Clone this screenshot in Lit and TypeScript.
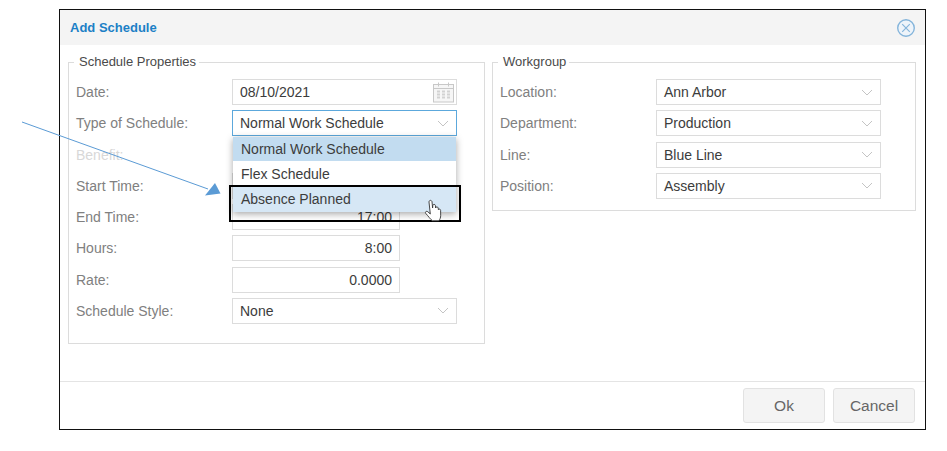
import { LitElement, html, css } from "lit";
import { customElement } from "lit/decorators.js";

const chevron = html`<svg class="chev" width="12" height="7" viewBox="0 0 12 7"><path d="M1 1l5 5 5-5" fill="none" stroke="#c4c4c4" stroke-width="1"/></svg>`;

@customElement("app-root")
export class AppRoot extends LitElement {
  static styles = css`
    :host { display: block; width: 947px; height: 451px; position: relative; background: #fff; overflow: hidden; font-family: "Liberation Sans", Arial, sans-serif; }
    .page { padding: 9px 0 0 59px; }
    .dialog { width: 867px; height: 421px; box-sizing: border-box; border: 1px solid #111; display: flex; flex-direction: column; background: #fff; }
    .head { height: 35px; flex: none; background: #f4f4f4; display: flex; align-items: center; justify-content: space-between; padding: 0 9px 0 10px; }
    .title { font-size: 13px; font-weight: bold; color: #1c80c6; }
    .body { flex: 1; display: flex; align-items: flex-start; gap: 7px; padding: 9px 9px 0 8px; }
    fieldset { margin: 0; box-sizing: border-box; border: 1px solid #dcdcdc; padding: 9px 0 0 7px; min-width: 0; }
    .left { width: 417px; height: 290px; }
    .right { width: 424px; height: 157px; }
    legend { font-size: 13px; color: #4a4a4a; padding: 0 3px 0 5px; margin-left: -2px; line-height: 16px; }
    .grid { display: grid; grid-template-columns: 156px auto; grid-auto-rows: 26px; row-gap: 5.25px; align-items: center; justify-content: start; }
    .label { font-size: 14px; color: #808080; }
    .label.off { color: #d8d8d8; }
    .ctl { box-sizing: border-box; height: 26px; width: 225px; border: 1px solid #dcdcdc; display: flex; align-items: center; justify-content: space-between; padding: 0 7px; font-size: 14px; color: #3c3c3c; background: #fff; }
    .ctl.num { width: 168px; justify-content: flex-end; }
    .ctl.focus { border-color: #5ca8dc; }
    .chev { flex: none; }
    .cal { margin-right: -5px; }
    .foot { height: 48px; flex: none; border-top: 1px solid #e4e4e4; display: flex; justify-content: flex-end; gap: 8px; padding: 6px 10px 0 0; box-sizing: border-box; }
    .btn { box-sizing: border-box; width: 82px; height: 35px; border: 1px solid #e2e2e2; border-radius: 3px; background: #f4f4f4; color: #666; font: 15.500px "Liberation Sans", Arial, sans-serif; padding: 0; }
    .menu { position: absolute; left: 233px; top: 137px; width: 223px; box-shadow: 0 2px 7px rgba(0,0,0,.35); background: #fff; font-size: 14px; color: #3c3c3c; }
    .opt { padding-left: 8px; display: flex; align-items: center; }
    .o1 { height: 24px; background: #c2dcf0; }
    .o2 { height: 25px; }
    .o3 { height: 26px; background: #d6e7f5; }
    .mark { position: absolute; left: 229px; top: 185px; width: 232px; height: 37px; box-sizing: border-box; border: 2px solid #000; }
    .overlay { position: absolute; left: 0; top: 0; pointer-events: none; }
  `;

  private row(label: string, body: unknown, off = false) {
    return html`<div class="label ${off ? "off" : ""}">${label}</div>${body}`;
  }
  private sel(v: string, focus = false) {
    return html`<div class="ctl ${focus ? "focus" : ""}"><span>${v}</span>${chevron}</div>`;
  }
  private num(v: string) {
    return html`<div class="ctl num"><span>${v}</span></div>`;
  }

  render() {
    return html`
      <div class="page">
        <div class="dialog">
          <div class="head">
            <div class="title">Add Schedule</div>
            <svg width="20" height="20" viewBox="0 0 20 20"><circle cx="10" cy="10" r="8.3" fill="#eef4fa" stroke="#85b5db" stroke-width="1.4"/><path d="M6.200 6.200l7.600 7.600M13.800 6.200l-7.600 7.600" stroke="#85b5db" stroke-width="1.200"/></svg>
          </div>
          <div class="body">
            <fieldset class="left">
              <legend>Schedule Properties</legend>
              <div class="grid">
                ${this.row("Date:", html`<div class="ctl"><span>08/10/2021</span>
                  <svg class="cal" width="21" height="21" viewBox="0 0 21 21" fill="none" stroke="#c8c8c8"><rect x="0.5" y="2.5" width="20" height="17.5" fill="#f6f6f6"/><path d="M0.5 6.500h20M5.500 0.500v4M15.500 0.500v4" /><path d="M4 9.500h3M9 9.500h3M14 9.500h3M4 12.500h3M9 12.500h3M14 12.500h3M4 15.500h3M9 15.500h3M14 15.500h3" stroke-width="2" stroke="#d2d2d2"/></svg></div>`)}
                ${this.row("Type of Schedule:", this.sel("Normal Work Schedule", true))}
                ${this.row("Benefit:", html`<div></div>`, true)}
                ${this.row("Start Time:", this.num("8:00"))}
                ${this.row("End Time:", this.num("17:00"))}
                ${this.row("Hours:", this.num("8:00"))}
                ${this.row("Rate:", this.num("0.0000"))}
                ${this.row("Schedule Style:", this.sel("None"))}
              </div>
            </fieldset>
            <fieldset class="right">
              <legend>Workgroup</legend>
              <div class="grid">
                ${this.row("Location:", this.sel("Ann Arbor"))}
                ${this.row("Department:", this.sel("Production"))}
                ${this.row("Line:", this.sel("Blue Line"))}
                ${this.row("Position:", this.sel("Assembly"))}
              </div>
            </fieldset>
          </div>
          <div class="foot">
            <button class="btn">Ok</button>
            <button class="btn">Cancel</button>
          </div>
        </div>
      </div>
      <div class="menu">
        <div class="opt o1">Normal Work Schedule</div>
        <div class="opt o2">Flex Schedule</div>
        <div class="opt o3">Absence Planned</div>
      </div>
      <div class="mark"></div>
      <svg class="overlay" width="947" height="451" viewBox="0 0 947 451">
        <path d="M22 122L208 189" stroke="#5b9bd5" stroke-width="1" fill="none"/>
        <path d="M205 195.500L215 183L220.500 193.500Z" fill="#5b9bd5"/>
        <path d="M430.500 202c0-2 2.500-2.200 3-.3l.6 6.300 .2-2.500c.3-1.500 2.300-1.500 2.600 0l.2 2.500c.2-1.500 2.300-1.600 2.600 0l.2 1.800c.3-1 2-1 2.200 .5l.1 5c0 2.500-.8 4-1.800 5.500h-6.500c-1.500-1-4.500-5-6.700-7.500-.9-1.300 .7-2.700 2.100-1.600l2.500 2.300z" transform="translate(-1.500 0)" fill="#fff" stroke="#333" stroke-width="0.9"/>
      </svg>
    `;
  }
}
